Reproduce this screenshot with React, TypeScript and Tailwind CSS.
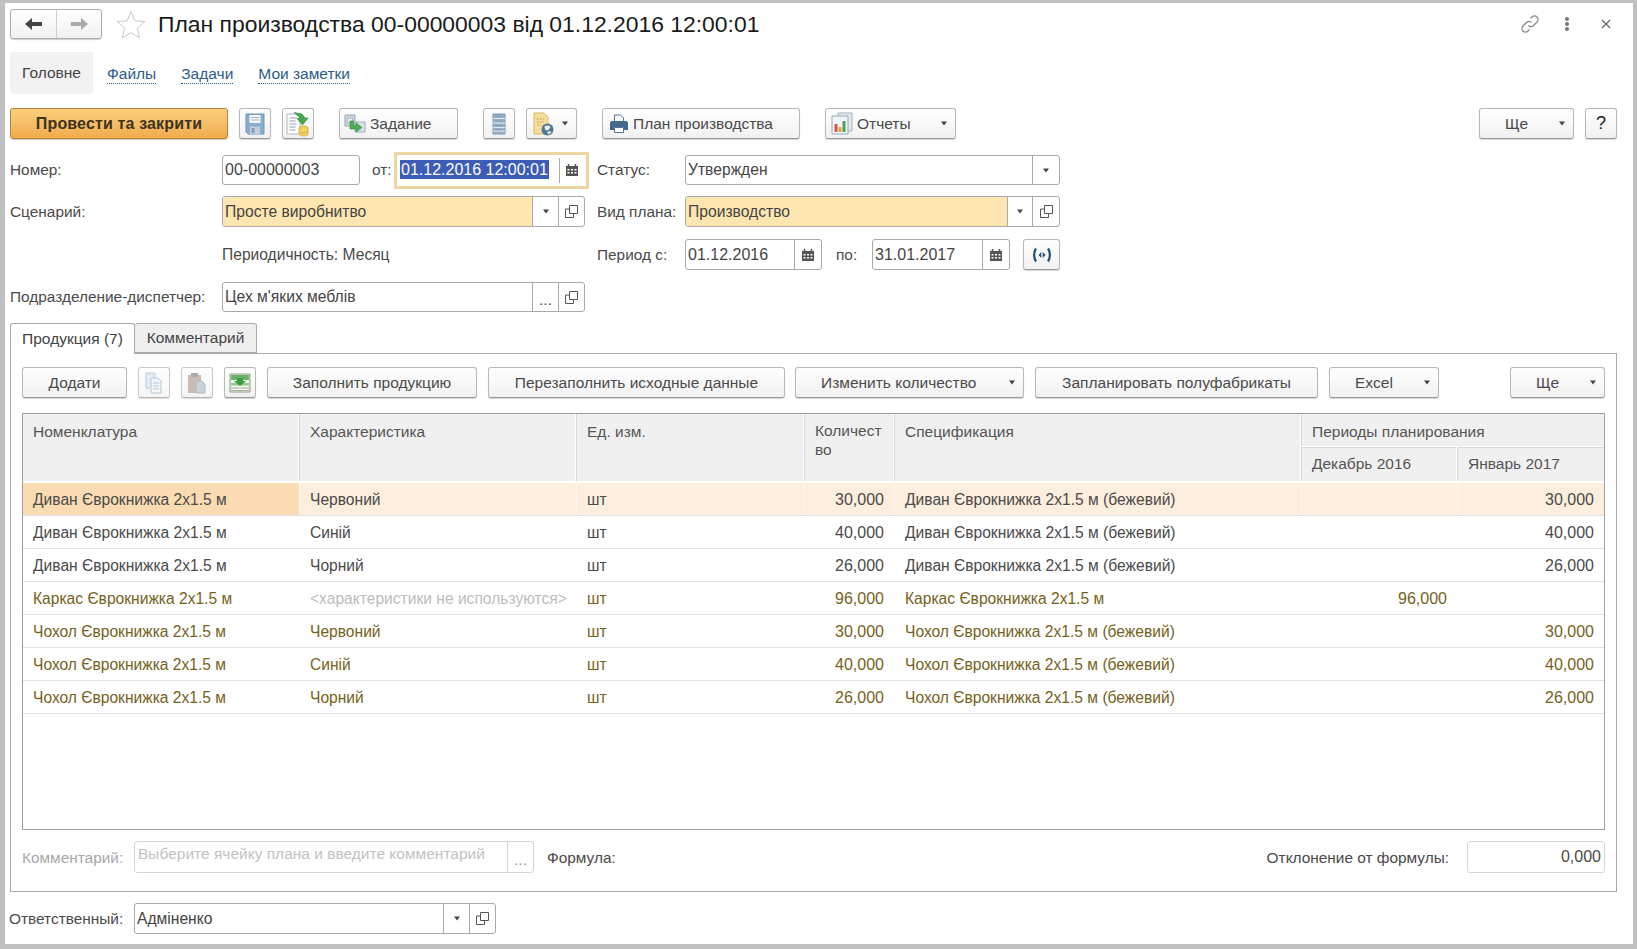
import type { ReactNode } from "react"

const FONT = "font-['Liberation_Sans',Arial,sans-serif]"

const tableRows = [
  { name: "Диван Єврокнижка 2х1.5 м", ch: "Червоний", qty: "30,000", spec: "Диван Єврокнижка 2х1.5 м (бежевий)", dec: "", jan: "30,000", semi: false },
  { name: "Диван Єврокнижка 2х1.5 м", ch: "Синій", qty: "40,000", spec: "Диван Єврокнижка 2х1.5 м (бежевий)", dec: "", jan: "40,000", semi: false },
  { name: "Диван Єврокнижка 2х1.5 м", ch: "Чорний", qty: "26,000", spec: "Диван Єврокнижка 2х1.5 м (бежевий)", dec: "", jan: "26,000", semi: false },
  { name: "Каркас Єврокнижка 2х1.5 м", ch: "<характеристики не используются>", qty: "96,000", spec: "Каркас Єврокнижка 2х1.5 м", dec: "96,000", jan: "", semi: true },
  { name: "Чохол Єврокнижка 2х1.5 м", ch: "Червоний", qty: "30,000", spec: "Чохол Єврокнижка 2х1.5 м (бежевий)", dec: "", jan: "30,000", semi: true },
  { name: "Чохол Єврокнижка 2х1.5 м", ch: "Синій", qty: "40,000", spec: "Чохол Єврокнижка 2х1.5 м (бежевий)", dec: "", jan: "40,000", semi: true },
  { name: "Чохол Єврокнижка 2х1.5 м", ch: "Чорний", qty: "26,000", spec: "Чохол Єврокнижка 2х1.5 м (бежевий)", dec: "", jan: "26,000", semi: true },
]

function Caret() {
  return (
    <svg width="8" height="5" viewBox="0 0 8 5" className="shrink-0">
      <path d="M1 0.5h6L4 4.5z" fill="#444" />
    </svg>
  )
}

function CalendarIcon() {
  return (
    <svg width="14" height="14" viewBox="0 0 14 14">
      <path d="M1 3h12v10H1z" fill="#555" />
      <path d="M3.5 1v3M10.5 1v3" stroke="#555" strokeWidth="1.6" />
      <path d="M2.5 6h2v1.5h-2zM6 6h2v1.5H6zM9.5 6h2v1.5h-2zM2.5 9h2v1.5h-2zM6 9h2v1.5H6zM9.5 9h2v1.5h-2z" fill="#fff" />
    </svg>
  )
}

function OpenIcon() {
  return (
    <svg width="13" height="13" viewBox="0 0 13 13" fill="none" stroke="#555" strokeWidth="1">
      <path d="M4.5 0.5h8v8h-8z" />
      <path d="M4.5 4h-4v8.500h8v-4" />
    </svg>
  )
}

function Btn({ w, children, className = "" }: { w: string; children: ReactNode; className?: string }) {
  return (
    <div className={`${w} h-[31px] shrink-0 flex items-center rounded-[3px] border border-[#b8b8b8] border-b-[#9a9a9a] bg-gradient-to-b from-white to-[#f1f1f1] shadow-[0_1px_1px_rgba(0,0,0,0.18)] text-[15.5px] text-[#4a4a4a] ${className}`}>
      {children}
    </div>
  )
}

function Cell({ w, children, className = "" }: { w: string; children?: ReactNode; className?: string }) {
  return (
    <div className={`${w} h-full shrink-0 flex items-center justify-center border-l border-[#a9a9a9] ${className}`}>
      {children}
    </div>
  )
}

function Field({ w, text, fill = false, num = false, h = "h-[30px]", children }: { w: string; text?: string; fill?: boolean; num?: boolean; h?: string; children?: ReactNode }) {
  return (
    <div className={`${w} ${h} shrink-0 flex rounded-[3px] border border-[#a9a9a9] overflow-hidden bg-white`}>
      <div className={`flex-1 min-w-0 flex items-center pl-[2px] text-[#444] ${num ? "text-[16px]" : "text-[15.65px]"} ${fill ? "bg-[#fee6b0]" : ""}`}>{text}</div>
      {children}
    </div>
  )
}

function FloppyIcon() {
  return (
    <svg width="20" height="22" viewBox="0 0 20 22">
      <path d="M1 1h18v20H3l-2-2z" fill="#8aadcc" stroke="#6f95b8" />
      <path d="M4.500 2h11v8h-11z" fill="#f3f7fa" />
      <path d="M6 4.500h8M6 7h8" stroke="#9db8cf" />
      <path d="M5 13.500h10V21H5z" fill="#c3cfda" />
      <path d="M6.500 15h3v5h-3z" fill="#7f9cb8" />
    </svg>
  )
}

function PostCloseIcon() {
  return (
    <svg width="26" height="26" viewBox="0 0 26 26">
      <path d="M2 3h13v20H2z" fill="#fff" stroke="#a9b6c2" />
      <path d="M4.500 7h7M4.500 10h6M4.500 13h7M4.500 16h6M4.500 19h6" stroke="#8fa0b0" />
      <path d="M9 1.500l8 1.500 3 4h3l-5.500 7L12 7.500h3.500L13 5z" fill="#45a84f" stroke="#2f8a3a" strokeWidth="0.6" />
      <ellipse cx="18.500" cy="17" rx="4.500" ry="2" fill="#f2d15c" stroke="#c09c31" strokeWidth="0.6" />
      <path d="M14 17v6c0 1 2 2 4.500 2s4.500-1 4.500-2v-6" fill="#f2d15c" stroke="#c09c31" strokeWidth="0.6" />
      <path d="M14 20c0 1 2 2 4.500 2s4.500-1 4.500-2" fill="none" stroke="#c09c31" strokeWidth="0.6" />
    </svg>
  )
}

function TaskIcon() {
  return (
    <svg width="22" height="22" viewBox="0 0 22 22">
      <path d="M1 2h10v11H1z" fill="#cad6e1" stroke="#95a7b7" />
      <path d="M3.500 5h5v5h-5z" fill="#e8eef3" stroke="#a8b8c6" />
      <path d="M11 9h10v10H11z" fill="#d9e0e6" stroke="#a2afba" />
      <path d="M6 8h3.500v5H12v-3l6 4.500-6 4.500v-3H6z" fill="#4caf50" stroke="#2e8a38" strokeWidth="0.6" />
    </svg>
  )
}

function ListIcon() {
  return (
    <svg width="14" height="22" viewBox="0 0 14 22">
      <path d="M1 1h12v20H1z" fill="#9db3c8" stroke="#7b98b2" />
      <path d="M1 5.500h12M1 10h12M1 14.500h12M1 18h12" stroke="#dce6ee" />
      <path d="M3 3h8M3 8h8M3 12.500h8M3 16.500h8" stroke="#7b98b2" />
    </svg>
  )
}

function DocClockIcon() {
  return (
    <svg width="24" height="26" viewBox="0 0 24 26">
      <path d="M2 2h10l4 4v17H2z" fill="#f6dd9a" stroke="#d6b96f" />
      <path d="M5 8h7M5 11h7M5 14h4" stroke="#c9a95d" strokeDasharray="2 1" />
      <circle cx="15.500" cy="18.500" r="6" fill="#4f7596" />
      <path d="M12.500 15.500c2-1.500 5-1 6 .5l-2 3-3 .5zM15 21l3-1 1.500 1.500-3 2z" fill="#e8eff5" />
    </svg>
  )
}

function PrinterIcon() {
  return (
    <svg width="20" height="20" viewBox="0 0 20 20">
      <path d="M5.500 1h6l3 3v5h-9z" fill="#fff" stroke="#4f7596" />
      <path d="M1 9c0-1 1-2 2-2h14c1 0 2 1 2 2v7h-4v-3H5v3H1z" fill="#44698a" />
      <path d="M5.500 13.500h9v5h-9z" fill="#fff" stroke="#4f7596" />
    </svg>
  )
}

function ReportIcon() {
  return (
    <svg width="24" height="24" viewBox="0 0 24 24">
      <path d="M8 1h14v18H8z" fill="#e4e9ee" stroke="#a5b2bd" />
      <path d="M2 4h16v18H2z" fill="#f2f4f6" stroke="#9aa8b5" />
      <path d="M4.500 12h3v8h-3z" fill="#d9534f" />
      <path d="M8.500 15h3v5h-3z" fill="#e2a33b" />
      <path d="M12.500 9h3v11h-3z" fill="#4aa35a" />
    </svg>
  )
}

function CopyIcon() {
  return (
    <svg width="20" height="22" viewBox="0 0 20 22">
      <path d="M2 1h9v15H2z" fill="#dce8f2" stroke="#a3bccf" />
      <path d="M7 6h7l3 3v12H7z" fill="#eef4f8" stroke="#9db5c8" />
      <path d="M9 11h6M9 14h6M9 17h6" stroke="#9db5c8" />
    </svg>
  )
}

function PasteIcon() {
  return (
    <svg width="20" height="22" viewBox="0 0 20 22">
      <path d="M1 3h13v18H1z" fill="#b5a799" />
      <path d="M4 1h7v4H4z" fill="#8f8f8f" />
      <path d="M9 9h6l3 3v9H9z" fill="#b7c2cb" stroke="#9aa6b0" />
    </svg>
  )
}

function RowsIcon() {
  return (
    <svg width="22" height="22" viewBox="0 0 22 22">
      <path d="M1 2h20v18H1z" fill="#f2f4ee" stroke="#8d9a84" />
      <path d="M2 3h18v5H2z" fill="#63b65f" />
      <path d="M2 11h18v2.500H2z" fill="#8fcb88" />
      <path d="M2 16h18M2 18.500h18" stroke="#a8b0a3" />
      <path d="M8 6h6v3h3l-6 5-6-5h3z" fill="#3f9a45" />
    </svg>
  )
}

export default function App() {
  return (
    <div className={`${FONT} w-[1637px] h-[949px] overflow-hidden bg-[#c0c0c0] pt-[3px] pl-[5px] pr-[4px] pb-[5px] text-[15.4px] text-[#4a4a4a]`}>
      <div className="h-[941px] bg-white pl-[5px] pr-[16px] flex flex-col">
        {/* title */}
        <div className="flex items-center h-[30px] mt-[6px] shrink-0">
          <div className="w-[92px] h-[30px] flex rounded-[3px] border border-[#b0b0b0] bg-gradient-to-b from-white to-[#f1f1f1] shadow-[0_1px_1px_rgba(0,0,0,0.2)]">
            <div className="w-[46px] flex items-center justify-center border-r border-[#cfcfcf]">
              <svg width="18" height="14" viewBox="0 0 18 14"><path d="M7 1v4h10v4H7v4L0 7z" fill="#444" /></svg>
            </div>
            <div className="flex-1 flex items-center justify-center">
              <svg width="18" height="14" viewBox="0 0 18 14"><path d="M11 1v4H1v4h10v4l7-6z" fill="#aaa" /></svg>
            </div>
          </div>
          <svg width="30" height="28" viewBox="0 0 30 28" className="ml-[14px]">
            <path d="M15 1.500l3.900 9.300 10 .8-7.600 6.500 2.300 9.700L15 22.600l-8.600 5.200 2.300-9.700L1.100 11.600l10-.8z" fill="none" stroke="#c8c8c8" />
          </svg>
          <div className="ml-[12px] text-[22.9px] text-[#1a1a1a] whitespace-nowrap">План производства 00-00000003 від 01.12.2016 12:00:01</div>
          <div className="ml-auto flex items-center pr-[6px]">
            <svg width="20" height="20" viewBox="0 0 20 20" fill="none" stroke="#888" strokeWidth="1.300">
              <path d="M8.500 11.500a3.500 3.500 0 0 0 5 0l3.500-3.500a3.500 3.500 0 0 0-5-5l-1.500 1.500" />
              <path d="M11.500 8.500a3.500 3.500 0 0 0-5 0l-3.500 3.500a3.500 3.500 0 0 0 5 5l1.500-1.500" />
            </svg>
            <svg width="6" height="16" viewBox="0 0 6 16" className="ml-[24px]"><circle cx="3" cy="3" r="2" fill="#777" /><circle cx="3" cy="8" r="2" fill="#777" /><circle cx="3" cy="13" r="2" fill="#777" /></svg>
            <svg width="10" height="10" viewBox="0 0 10 10" className="ml-[31px]"><path d="M1 1l8 8M9 1l-8 8" stroke="#666" strokeWidth="1.300" /></svg>
          </div>
        </div>

        {/* sections */}
        <div className="flex items-center mt-[13px] h-[42px] shrink-0">
          <div className="w-[83px] h-[42px] flex items-center justify-center rounded-[3px] bg-[#f2f2f2] text-[15.5px] text-[#444]">Головне</div>
          <span className="ml-[14px] mt-[2px] text-[15.5px] text-[#2b5c8a] border-b border-dotted border-[#2b5c8a] leading-[18px]">Файлы</span>
          <span className="ml-[25px] mt-[2px] text-[15.5px] text-[#2b5c8a] border-b border-dotted border-[#2b5c8a] leading-[18px]">Задачи</span>
          <span className="ml-[25px] mt-[2px] text-[15.5px] text-[#2b5c8a] border-b border-dotted border-[#2b5c8a] leading-[18px]">Мои заметки</span>
        </div>

        {/* commands */}
        <div className="flex items-center mt-[14px] shrink-0">
          <div className="w-[218px] h-[31px] flex items-center justify-center rounded-[3px] border border-[#b4823a] bg-gradient-to-b from-[#fbcf7f] to-[#f0ac4c] shadow-[0_1px_1px_rgba(0,0,0,0.2)] text-[16px] tracking-[0.15px] font-bold text-[#3c3320]">Провести та закрити</div>
          <Btn w="w-[32px]" className="ml-[11px] justify-center"><FloppyIcon /></Btn>
          <Btn w="w-[32px]" className="ml-[11px] justify-center"><PostCloseIcon /></Btn>
          <Btn w="w-[119px]" className="ml-[25px] pl-[4px] gap-[4px]"><TaskIcon />Задание</Btn>
          <Btn w="w-[32px]" className="ml-[25px] justify-center"><ListIcon /></Btn>
          <Btn w="w-[51px]" className="ml-[11px] pl-[5px] gap-[5px]"><DocClockIcon /><Caret /></Btn>
          <Btn w="w-[198px]" className="ml-[25px] pl-[6px] gap-[4px]"><PrinterIcon />План производства</Btn>
          <Btn w="w-[131px]" className="ml-[25px] pl-[4px] gap-[3px]"><ReportIcon />Отчеты<span className="ml-auto mr-[7px]"><Caret /></span></Btn>
          <Btn w="w-[95px]" className="ml-auto pl-[25px]">Ще<span className="ml-auto mr-[7px]"><Caret /></span></Btn>
          <Btn w="w-[32px]" className="ml-[11px] justify-center text-[18px] text-[#222]">?</Btn>
        </div>

        {/* header fields */}
        <div className="mt-[16px] flex items-center h-[30px] shrink-0">
          <div className="w-[212px] shrink-0">Номер:</div>
          <Field w="w-[138px]" text="00-00000003" num />
          <div className="ml-[12px] w-[22px] shrink-0">от:</div>
          <div className="w-[195px] h-[37px] shrink-0 flex border-[3px] border-[#edd6a0] bg-white">
            <div className="flex-1 flex items-center pl-[3px] pb-[1px]"><span className="bg-[#3d5cb8] text-white text-[16px] leading-[19px] px-[1px]">01.12.2016 12:00:01</span></div>
            <Cell w="w-[27px]" className="my-[3px] !h-auto pr-[2px]"><CalendarIcon /></Cell>
          </div>
          <div className="ml-[8px] w-[88px] shrink-0">Статус:</div>
          <Field w="w-[375px]" text="Утвержден">
            <Cell w="w-[27px]"><Caret /></Cell>
          </Field>
        </div>

        <div className="mt-[11px] flex items-center h-[31px] shrink-0">
          <div className="w-[212px] shrink-0">Сценарий:</div>
          <Field w="w-[363px]" text="Просте виробнитво" fill h="h-[31px]">
            <Cell w="w-[26px]"><Caret /></Cell>
            <Cell w="w-[26px]"><OpenIcon /></Cell>
          </Field>
          <div className="ml-[12px] w-[88px] shrink-0">Вид плана:</div>
          <Field w="w-[375px]" text="Производство" fill h="h-[31px]">
            <Cell w="w-[25px]"><Caret /></Cell>
            <Cell w="w-[27px]"><OpenIcon /></Cell>
          </Field>
        </div>

        <div className="mt-[12px] flex items-center h-[31px] shrink-0">
          <div className="w-[212px] shrink-0" />
          <div className="w-[375px] shrink-0 text-[15.6px]">Периодичность: Месяц</div>
          <div className="w-[88px] shrink-0">Период с:</div>
          <Field w="w-[137px]" text="01.12.2016" num h="h-[31px]">
            <Cell w="w-[27px]"><CalendarIcon /></Cell>
          </Field>
          <div className="ml-[14px] w-[36px] shrink-0">по:</div>
          <Field w="w-[138px]" text="31.01.2017" num h="h-[31px]">
            <Cell w="w-[27px]"><CalendarIcon /></Cell>
          </Field>
          <Btn w="w-[37px]" className="ml-[13px] justify-center">
            <svg width="22" height="16" viewBox="0 0 22 16" fill="none" stroke="#1f4e79" strokeWidth="2.200">
              <path d="M5 1.500C2.500 5 2.500 11 5 14.500M17 1.500c2.500 3.500 2.500 9.500 0 13" />
              <path d="M7.500 8l2.800-3v6zM14.500 8l-2.800-3v6z" fill="#1f4e79" stroke="none" />
            </svg>
          </Btn>
        </div>

        <div className="mt-[12px] flex items-center h-[30px] shrink-0">
          <div className="w-[212px] shrink-0">Подразделение-диспетчер:</div>
          <Field w="w-[363px]" text="Цех м'яких меблів">
            <Cell w="w-[26px]"><span className="relative top-[3px] leading-none">...</span></Cell>
            <Cell w="w-[26px]"><OpenIcon /></Cell>
          </Field>
        </div>

        {/* tabs */}
        <div className="mt-[11px] flex items-end h-[30px] shrink-0">
          <div className="w-[125px] h-[31px] -mb-px z-10 flex items-center justify-center rounded-t-[3px] border border-b-0 border-[#a9a9a9] bg-white text-[15.5px] text-[#444]">Продукция (7)</div>
          <div className="w-[122px] h-[30px] flex items-center justify-center rounded-t-[3px] border border-l-0 border-[#a9a9a9] bg-[#efefef] text-[15.5px] text-[#444]">Комментарий</div>
        </div>

        <div className="h-[539px] shrink-0 border border-[#a9a9a9] pl-[11px] pr-[11px] flex flex-col">
          {/* table commands */}
          <div className="flex items-center mt-[13px] shrink-0">
            <Btn w="w-[105px]" className="justify-center">Додати</Btn>
            <Btn w="w-[32px]" className="ml-[11px] justify-center opacity-75"><CopyIcon /></Btn>
            <Btn w="w-[32px]" className="ml-[11px] justify-center opacity-75"><PasteIcon /></Btn>
            <Btn w="w-[32px]" className="ml-[11px] justify-center"><RowsIcon /></Btn>
            <Btn w="w-[210px]" className="ml-[11px] justify-center">Заполнить продукцию</Btn>
            <Btn w="w-[297px]" className="ml-[11px] justify-center">Перезаполнить исходные данные</Btn>
            <Btn w="w-[229px]" className="ml-[10px] pl-[25px]">Изменить количество<span className="ml-auto mr-[7px]"><Caret /></span></Btn>
            <Btn w="w-[283px]" className="ml-[11px] justify-center">Запланировать полуфабрикаты</Btn>
            <Btn w="w-[110px]" className="ml-[11px] pl-[25px]">Excel<span className="ml-auto mr-[7px]"><Caret /></span></Btn>
            <Btn w="w-[95px]" className="ml-auto pl-[25px]">Ще<span className="ml-auto mr-[7px]"><Caret /></span></Btn>
          </div>

          {/* table */}
          <div className="mt-[15px] h-[417px] shrink-0 border border-[#9e9e9e] flex flex-col">
            <div className="h-[69px] shrink-0 flex bg-[#f0f0f0] border-b-2 border-white text-[15.5px] text-[#555]">
              <div className="w-[276px] shrink-0 pl-[10px] pt-[6px] border-r border-white shadow-[1px_0_0_#d8d8d8]">Номенклатура</div>
              <div className="w-[277px] shrink-0 pl-[11px] pt-[6px] border-r border-white shadow-[1px_0_0_#d8d8d8]">Характеристика</div>
              <div className="w-[228px] shrink-0 pl-[11px] pt-[6px] border-r border-white shadow-[1px_0_0_#d8d8d8]">Ед. изм.</div>
              <div className="w-[90px] shrink-0 pl-[11px] pt-[7px] leading-[19px] border-r border-white shadow-[1px_0_0_#d8d8d8] break-all">Количест<br />во</div>
              <div className="w-[407px] shrink-0 pl-[11px] pt-[6px] border-r border-white shadow-[1px_0_0_#d8d8d8]">Спецификация</div>
              <div className="flex-1 flex flex-col">
                <div className="h-[33px] pl-[11px] pt-[6px] border-b border-white shadow-[0_1px_0_#d8d8d8]">Периоды планирования</div>
                <div className="flex-1 flex">
                  <div className="w-[156px] shrink-0 pl-[11px] flex items-center border-r border-white shadow-[1px_0_0_#d8d8d8]">Декабрь 2016</div>
                  <div className="flex-1 pl-[11px] flex items-center">Январь 2017</div>
                </div>
              </div>
            </div>
            {tableRows.map((r, i) => {
              const sel = i === 0
              const color = r.semi ? "text-[#75621c]" : "text-[#4a4a4a]"
              return (
                <div key={i} className={`h-[33px] shrink-0 flex items-center border-b border-[#e2e2e2] text-[15.6px] ${color} ${sel ? "bg-[#fdeedd]" : ""}`}>
                  <div className={`w-[276px] h-full shrink-0 pl-[10px] pt-[1px] flex items-center ${sel ? "bg-[#fbdcb2]" : ""}`}>{r.name}</div>
                  <div className={`w-[277px] h-full shrink-0 pl-[10px] pt-[1px] flex items-center border-l border-white/60 ${r.ch.startsWith("<") ? "text-[#bdbdbd]" : ""}`}>{r.ch}</div>
                  <div className="w-[228px] h-full shrink-0 pl-[10px] pt-[1px] flex items-center border-l border-white/60">шт</div>
                  <div className="w-[90px] h-full shrink-0 pr-[10px] pt-[1px] flex items-center justify-end text-[16px] border-l border-white/60">{r.qty}</div>
                  <div className="w-[407px] h-full shrink-0 pl-[10px] pt-[1px] flex items-center border-l border-white/60">{r.spec}</div>
                  <div className="w-[156px] h-full shrink-0 pr-[10px] pt-[1px] flex items-center justify-end text-[16px] border-l border-white/60">{r.dec}</div>
                  <div className="flex-1 h-full pr-[10px] pt-[1px] flex items-center justify-end text-[16px] border-l border-white/60">{r.jan}</div>
                </div>
              )
            })}
          </div>

          {/* comment */}
          <div className="mt-[11px] flex items-center h-[32px] shrink-0">
            <div className="w-[112px] pt-[1px] shrink-0 text-[#a8a8a8]">Комментарий:</div>
            <div className="w-[400px] h-[32px] shrink-0 flex rounded-[3px] border border-[#d5d5d5]">
              <div className="flex-1 pl-[3px] text-[15.5px] text-[#c2c2c2]">Выберите ячейку плана и введите комментарий</div>
              <div className="w-[26px] flex items-center justify-center border-l border-[#d5d5d5] text-[#999]"><span className="relative top-[3px] leading-none">...</span></div>
            </div>
            <div className="ml-[13px] pt-[1px]">Формула:</div>
            <div className="ml-auto pt-[1px]">Отклонение от формулы:</div>
            <div className="ml-[18px] w-[138px] h-[32px] shrink-0 flex items-center justify-end pr-[3px] rounded-[3px] border border-[#d5d5d5] text-[16px]">0,000</div>
          </div>
        </div>

        {/* footer */}
        <div className="mt-[11px] flex items-center h-[31px] shrink-0">
          <div className="w-[124px] -ml-px mr-px shrink-0">Ответственный:</div>
          <Field w="w-[362px]" text="Адміненко" h="h-[31px]">
            <Cell w="w-[26px]"><Caret /></Cell>
            <Cell w="w-[26px]"><OpenIcon /></Cell>
          </Field>
        </div>
      </div>
    </div>
  )
}
